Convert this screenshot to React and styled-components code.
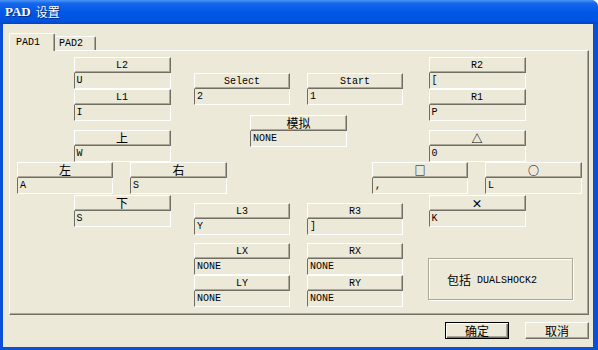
import React from "react";
import styled, { createGlobalStyle } from "styled-components";

const Global = createGlobalStyle`
  * { box-sizing: border-box; }
  body {
    margin: 0;
    background: #ffffff;
    font-family: "Liberation Mono", "Noto Sans CJK SC", monospace;
    font-size: 10px;
    color: #000;
  }
`;

const FACE = "#ece9d8";
const DARK = "#716f64";
const MID = "#aca899";

const Window = styled.div`
  width: 598px;
  height: 350px;
  display: flex;
  flex-direction: column;
  background: #0a4fd6;
  border-top-right-radius: 7px;
  overflow: hidden;
`;

const TitleBar = styled.div`
  height: 24px;
  flex: none;
  display: flex;
  align-items: center;
  padding-left: 5px;
  gap: 5px;
  color: #fff;
  font-weight: bold;
  background: linear-gradient(180deg, #4a97f8 0%, #1566ec 14%, #0058e6 50%, #0054e0 85%, #0046c8 100%);
  text-shadow: 1px 1px 0 #0a2a80;
`;

const TitleLatin = styled.span`
  font-family: "Liberation Serif", serif;
  font-size: 13px;
`;

const Cjk = styled.span`
  font-family: "Noto Sans CJK SC", sans-serif;
  font-size: ${(p) => p.$size || 12}px;
  font-weight: ${(p) => p.$weight || "normal"};
  line-height: 12px;
  margin-top: ${(p) => p.$shift || 0}px;
`;

const Body = styled.div`
  flex: 1;
  margin: 0 5px 3px 3px;
  background: ${FACE};
  padding: 9px 4px 0 6px;
  display: flex;
  flex-direction: column;
`;

const TabStrip = styled.div`
  height: 17px;
  display: flex;
  align-items: flex-end;
`;

const Tab = styled.div`
  position: relative;
  z-index: 1;
  height: ${(p) => (p.$active ? 18 : 14)}px;
  width: ${(p) => p.$w}px;
  margin-bottom: ${(p) => (p.$active ? -1 : 0)}px;
  background: ${FACE};
  border-top: 1px solid #fff;
  border-left: ${(p) => (p.$active ? "1px solid #fff" : "none")};
  border-right: 1px solid ${DARK};
  box-shadow: inset -1px 0 0 ${MID};
  border-radius: 2px 2px 0 0;
  display: flex;
  align-items: center;
  padding-left: ${(p) => (p.$active ? 6 : 4)}px;
  padding-bottom: ${(p) => (p.$active ? 1 : 0)}px;
`;

const Panel = styled.div`
  height: 265px;
  border-top: 1px solid #fff;
  border-left: 1px solid #fff;
  border-right: 1px solid ${DARK};
  border-bottom: 1px solid ${DARK};
  box-shadow: inset -1px -1px 0 ${MID};
  display: grid;
  grid-template-columns: 7px 177px 33px 145px 31px 179px 1fr;
  align-items: start;
`;

const Cluster = styled.div`
  grid-row: 1;
  grid-column: ${(p) => p.$cols};
  padding-top: ${(p) => p.$top}px;
  display: flex;
  flex-direction: column;
  align-items: center;
`;

const Pair = styled.div`
  display: flex;
  gap: ${(p) => p.$gap}px;
  margin-top: ${(p) => p.$mt || 0}px;
`;

const KeyBox = styled.div`
  width: ${(p) => p.$w || 97}px;
  margin-top: ${(p) => p.$mt || 0}px;
  display: flex;
  flex-direction: column;
`;

const KeyButton = styled.div`
  height: 16px;
  background: ${FACE};
  border-top: 1px solid #fff;
  border-left: 1px solid #fff;
  border-right: 1px solid ${DARK};
  border-bottom: 1px solid ${DARK};
  box-shadow: inset -1px -1px 0 ${MID};
  display: flex;
  align-items: center;
  justify-content: center;
  padding-top: 1px;
`;

const KeyField = styled.div`
  height: 16px;
  border-left: 1px solid ${DARK};
  border-right: 1px solid #fff;
  border-bottom: 1px solid #fff;
  display: flex;
  align-items: center;
  padding-left: 2px;
  white-space: pre;
`;

const InfoBox = styled.div`
  align-self: flex-start;
  margin: 31px 0 0 56px;
  width: 145px;
  height: 42px;
  border: 1px solid ${MID};
  box-shadow: inset 1px 1px 0 #fff, 1px 1px 0 #fff;
  display: flex;
  align-items: center;
  gap: 6px;
  padding: 2px 0 0 18px;
`;

const Footer = styled.div`
  display: flex;
  justify-content: flex-end;
  gap: 16px;
  margin-top: 7px;
`;

const DialogButton = styled.div`
  width: 64px;
  height: 17px;
  background: ${FACE};
  border: 1px solid ${(p) => (p.$default ? "#000" : "#fff")};
  border-right-color: ${(p) => (p.$default ? "#000" : DARK)};
  border-bottom-color: ${(p) => (p.$default ? "#000" : DARK)};
  box-shadow: ${(p) =>
    p.$default
      ? `inset 1px 1px 0 #fff, inset -1px -1px 0 ${DARK}, inset -2px -2px 0 ${MID}`
      : `inset -1px -1px 0 ${MID}`};
  display: flex;
  align-items: center;
  justify-content: center;
`;

const SYMBOLS = "△□○×";
const isCjk = (s) => /[^\x00-\x7f]/.test(s);

function Label({ text }) {
  if (SYMBOLS.includes(text))
    return (
      <Cjk $size={11} $weight="bold" $shift={-1}>
        {text}
      </Cjk>
    );
  if (!isCjk(text)) return <span>{text}</span>;
  return <Cjk $shift={-2}>{text}</Cjk>;
}

function Key({ label, value, w, mt }) {
  return (
    <KeyBox $w={w} $mt={mt}>
      <KeyButton>
        <Label text={label} />
      </KeyButton>
      <KeyField>{value}</KeyField>
    </KeyBox>
  );
}

export default function App() {
  return (
    <>
      <Global />
      <Window>
        <TitleBar>
          <TitleLatin>PAD</TitleLatin>
          <Cjk>设置</Cjk>
        </TitleBar>
        <Body>
          <TabStrip>
            <Tab $active $w={46}>PAD1</Tab>
            <Tab $w={41}>PAD2</Tab>
          </TabStrip>
          <Panel>
            <Cluster $cols="2 / 4" $top={6}>
              <Key label="L2" value="U" />
              <Key label="L1" value="I" />
              <Key label="上" value="W" mt={9} />
              <Pair $gap={17}>
                <Key label="左" value="A" w={96} />
                <Key label="右" value="S" />
              </Pair>
              <Key label="下" value="S" mt={1} />
            </Cluster>

            <Cluster $cols="3 / 6" $top={22}>
              <Pair $gap={17}>
                <Key label="Select" value="2" w={96} />
                <Key label="Start" value="1" w={96} />
              </Pair>
              <Key label="模拟" value="NONE" mt={10} />
              <Pair $gap={17} $mt={56}>
                <Key label="L3" value="Y" w={96} />
                <Key label="R3" value="]" w={96} />
              </Pair>
              <Pair $gap={17} $mt={8}>
                <Key label="LX" value="NONE" w={96} />
                <Key label="RX" value="NONE" w={96} />
              </Pair>
              <Pair $gap={17}>
                <Key label="LY" value="NONE" w={96} />
                <Key label="RY" value="NONE" w={96} />
              </Pair>
            </Cluster>

            <Cluster $cols="5 / 7" $top={6}>
              <Key label="R2" value="[" />
              <Key label="R1" value="P" />
              <Key label="△" value="0" mt={9} />
              <Pair $gap={17}>
                <Key label="□" value="," w={96} />
                <Key label="○" value="L" />
              </Pair>
              <Key label="×" value="K" mt={1} />
              <InfoBox>
                <Cjk>包括</Cjk>
                <span>DUALSHOCK2</span>
              </InfoBox>
            </Cluster>
          </Panel>
          <Footer>
            <DialogButton $default>
              <Cjk>确定</Cjk>
            </DialogButton>
            <DialogButton>
              <Cjk>取消</Cjk>
            </DialogButton>
          </Footer>
        </Body>
      </Window>
    </>
  );
}
